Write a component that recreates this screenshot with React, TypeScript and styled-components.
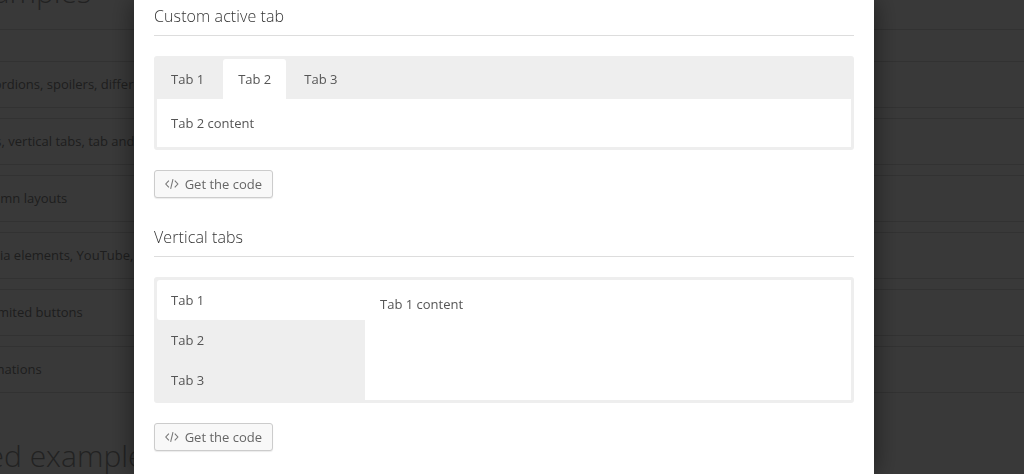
import React from 'react';
import styled, { createGlobalStyle } from 'styled-components';

const GlobalStyle = createGlobalStyle`
  html, body {
    margin: 0;
    height: 100%;
    overflow: hidden;
    background: #fff;
    font-family: "Open Sans", "Liberation Sans", sans-serif;
    font-size: 13px;
    color: #333;
  }
  * {
    box-sizing: border-box;
  }
`;

const Page = styled.div`
  width: 1024px;
  height: 474px;
  overflow: hidden;
`;

const PageTitle = styled.h2`
  margin: -28px 0 0;
  height: 58px;
  text-indent: -38px;
  border-bottom: 1px solid #ddd;
  font-size: 30px;
  font-weight: 300;
  line-height: 40px;
  white-space: nowrap;
  color: #999;
`;

const FeatureList = styled.div`
  display: flex;
  flex-direction: column;
  gap: 10px;
  margin-top: 31px;
`;

const FeatureRow = styled.div`
  height: 47px;
  text-indent: -27px;
  border-top: 1px solid #ddd;
  border-bottom: 1px solid #ddd;
  line-height: 45px;
  white-space: nowrap;
  color: #888;
`;

const SectionTitle = styled.h2`
  margin: 43px 0 0;
  font-size: 30px;
  font-weight: 300;
  line-height: 40px;
  white-space: nowrap;
  text-indent: -110px;
  color: #999;
`;

const Overlay = styled.div`
  position: fixed;
  inset: 0;
  background: rgba(0, 0, 0, 0.775);
`;

const Modal = styled.div`
  position: fixed;
  top: 0;
  left: 134px;
  width: 740px;
  height: 474px;
  padding: 0 20px;
  background: #fff;
  box-shadow: 0 0 24px rgba(0, 0, 0, 0.5);
`;

const Heading = styled.div<{ $first?: boolean }>`
  height: 36px;
  margin-top: ${({ $first }) => ($first ? '0' : '23px')};
  padding-top: 4px;
  border-bottom: 1px solid #ddd;
  font-size: 16px;
  font-weight: 300;
  letter-spacing: 0.1px;
  line-height: 24px;
  color: #333;
`;

const TabsBox = styled.div<{ $vertical?: boolean }>`
  display: flex;
  flex-direction: ${({ $vertical }) => ($vertical ? 'row' : 'column')};
  margin-top: 20px;
  height: ${({ $vertical }) => ($vertical ? '126px' : '94px')};
  border: 3px solid #eee;
  border-radius: 3px;
  background: #fff;
`;

const Tab = styled.div<{ $active?: boolean; $side?: boolean }>`
  height: 40px;
  padding: 0 15px 0 ${({ $side }) => ($side ? '14px' : '15px')};
  line-height: 40px;
  font-size: 13px;
  color: #555;
  background: ${({ $active }) => ($active ? '#fff' : 'transparent')};
  border-radius: ${({ $side }) => ($side ? '3px 0 0 3px' : '3px 3px 0 0')};
`;

const TabBar = styled.div`
  display: flex;
  gap: 3px;
  height: 40px;
  background: #eee;

  ${Tab}:first-child {
    padding: 0 16px 0 14px;
  }
`;

const SideBar = styled.div`
  display: flex;
  flex-direction: column;
  flex: 0 0 208px;
  background: #eee;
`;

const TabContent = styled.div<{ $vertical?: boolean }>`
  padding: ${({ $vertical }) => ($vertical ? '14px 15px' : '14px')};
  font-size: 13px;
  line-height: 20px;
  color: #555;
`;

const CodeButton = styled.button`
  display: flex;
  align-items: center;
  gap: 6px;
  height: 28px;
  width: 119px;
  margin-top: 20px;
  padding: 0 10px;
  font-family: inherit;
  font-size: 13px;
  white-space: nowrap;
  color: #666;
  background: #f8f8f8;
  border: 1px solid #ccc;
  border-radius: 3px;
  box-shadow: 0 1px 1px rgba(0, 0, 0, 0.08);
`;

const CodeIcon = () => (
  <svg width="14" height="12" viewBox="0 0 14 12" fill="none" stroke="#777" strokeWidth="1.1">
    <path d="M4 2.5 L0.8 6 L4 9.5" />
    <path d="M10 2.5 L13.2 6 L10 9.5" />
    <path d="M8.2 1 L5.8 11" />
  </svg>
);

const GetCode = () => (
  <CodeButton>
    <CodeIcon />
    Get the code
  </CodeButton>
);

const rows = [
  'Accordions, spoilers, different styles',
  'Tabs, vertical tabs, tab and more',
  'Column layouts',
  'Media elements, YouTube, more',
  'Unlimited buttons',
  'Animations',
];

export default function App() {
  return (
    <>
      <GlobalStyle />
      <Page>
        <PageTitle>Examples</PageTitle>
        <FeatureList>
          {rows.map((r) => (
            <FeatureRow key={r}>{r}</FeatureRow>
          ))}
        </FeatureList>
        <SectionTitle>Advanced examples</SectionTitle>
      </Page>
      <Overlay />
      <Modal>
        <Heading $first>Custom active tab</Heading>
        <TabsBox>
          <TabBar>
            <Tab>Tab 1</Tab>
            <Tab $active>Tab 2</Tab>
            <Tab>Tab 3</Tab>
          </TabBar>
          <TabContent>Tab 2 content</TabContent>
        </TabsBox>
        <GetCode />
        <Heading>Vertical tabs</Heading>
        <TabsBox $vertical>
          <SideBar>
            <Tab $active $side>Tab 1</Tab>
            <Tab $side>Tab 2</Tab>
            <Tab $side>Tab 3</Tab>
          </SideBar>
          <TabContent $vertical>Tab 1 content</TabContent>
        </TabsBox>
        <GetCode />
      </Modal>
    </>
  );
}
